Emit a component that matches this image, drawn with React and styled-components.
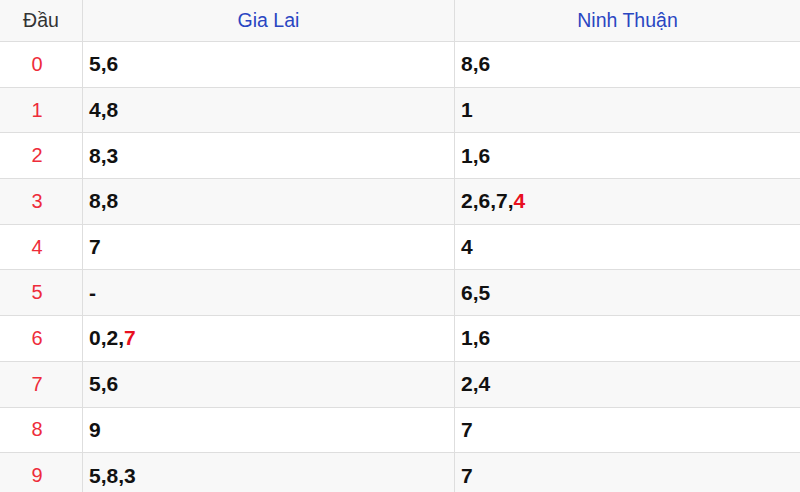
import styled, { createGlobalStyle } from "styled-components";

const GlobalStyle = createGlobalStyle`
  html, body {
    margin: 0;
    padding: 0;
    background: #ffffff;
    overflow: hidden;
  }
  body {
    font-family: "Liberation Sans", Arial, sans-serif;
  }
`;

const rows = [
  { head: "0", gl: ["5", "6"], nt: ["8", "6"] },
  { head: "1", gl: ["4", "8"], nt: ["1"] },
  { head: "2", gl: ["8", "3"], nt: ["1", "6"] },
  { head: "3", gl: ["8", "8"], nt: ["2", "6", "7", "4"], ntHot: 3 },
  { head: "4", gl: ["7"], nt: ["4"] },
  { head: "5", gl: ["-"], nt: ["6", "5"] },
  { head: "6", gl: ["0", "2", "7"], nt: ["1", "6"], glHot: 2 },
  { head: "7", gl: ["5", "6"], nt: ["2", "4"] },
  { head: "8", gl: ["9"], nt: ["7"] },
  { head: "9", gl: ["5", "8", "3"], nt: ["7"] },
];

function Numbers({ list, hot }) {
  return list.map((n, i) => (
    <span key={i}>
      {i > 0 && ","}
      {i === hot ? <Hot>{n}</Hot> : n}
    </span>
  ));
}

function App() {
  return (
    <>
      <GlobalStyle />
      <Table>
        <HeadRow>
          <HeadCell>Đầu</HeadCell>
          <HeadCell $province>Gia Lai</HeadCell>
          <HeadCell $province>Ninh Thuận</HeadCell>
        </HeadRow>
        {rows.map((r, i) => (
          <Row key={r.head} $odd={i % 2 === 1}>
            <IndexCell>{r.head}</IndexCell>
            <NumCell>
              <Numbers list={r.gl} hot={r.glHot} />
            </NumCell>
            <NumCell>
              <Numbers list={r.nt} hot={r.ntHot} />
            </NumCell>
          </Row>
        ))}
      </Table>
    </>
  );
}

export default App;

const Table = styled.div`
  width: 800px;
  display: flex;
  flex-direction: column;
`;

const HeadRow = styled.div`
  display: grid;
  grid-template-columns: 82px 372px 1fr;
  height: 42px;
  background: #f8f8f8;
  border-bottom: 1px solid #dedede;
  box-sizing: border-box;
`;

const HeadCell = styled.div`
  display: flex;
  align-items: center;
  justify-content: center;
  font-size: 19.5px;
  color: ${(p) => (p.$province ? "#2a46c2" : "#333333")};
  border-left: ${(p) => (p.$province ? "1px solid #dedede" : "none")};
  padding-bottom: 1px;
`;

const Row = styled.div`
  display: grid;
  grid-template-columns: 82px 372px 1fr;
  height: 45.7px;
  flex-shrink: 0;
  background: ${(p) => (p.$odd ? "#f8f8f8" : "#ffffff")};
  border-bottom: 1px solid #dedede;
  box-sizing: border-box;
`;

const IndexCell = styled.div`
  display: flex;
  align-items: center;
  justify-content: center;
  padding-right: 8px;
  font-size: 20px;
  color: #ee2c3a;
`;

const NumCell = styled.div`
  display: flex;
  align-items: center;
  padding-left: 6px;
  border-left: 1px solid #dedede;
  font-size: 21px;
  font-weight: 700;
  color: #111111;
`;

const Hot = styled.span`
  color: #e8101f;
`;
